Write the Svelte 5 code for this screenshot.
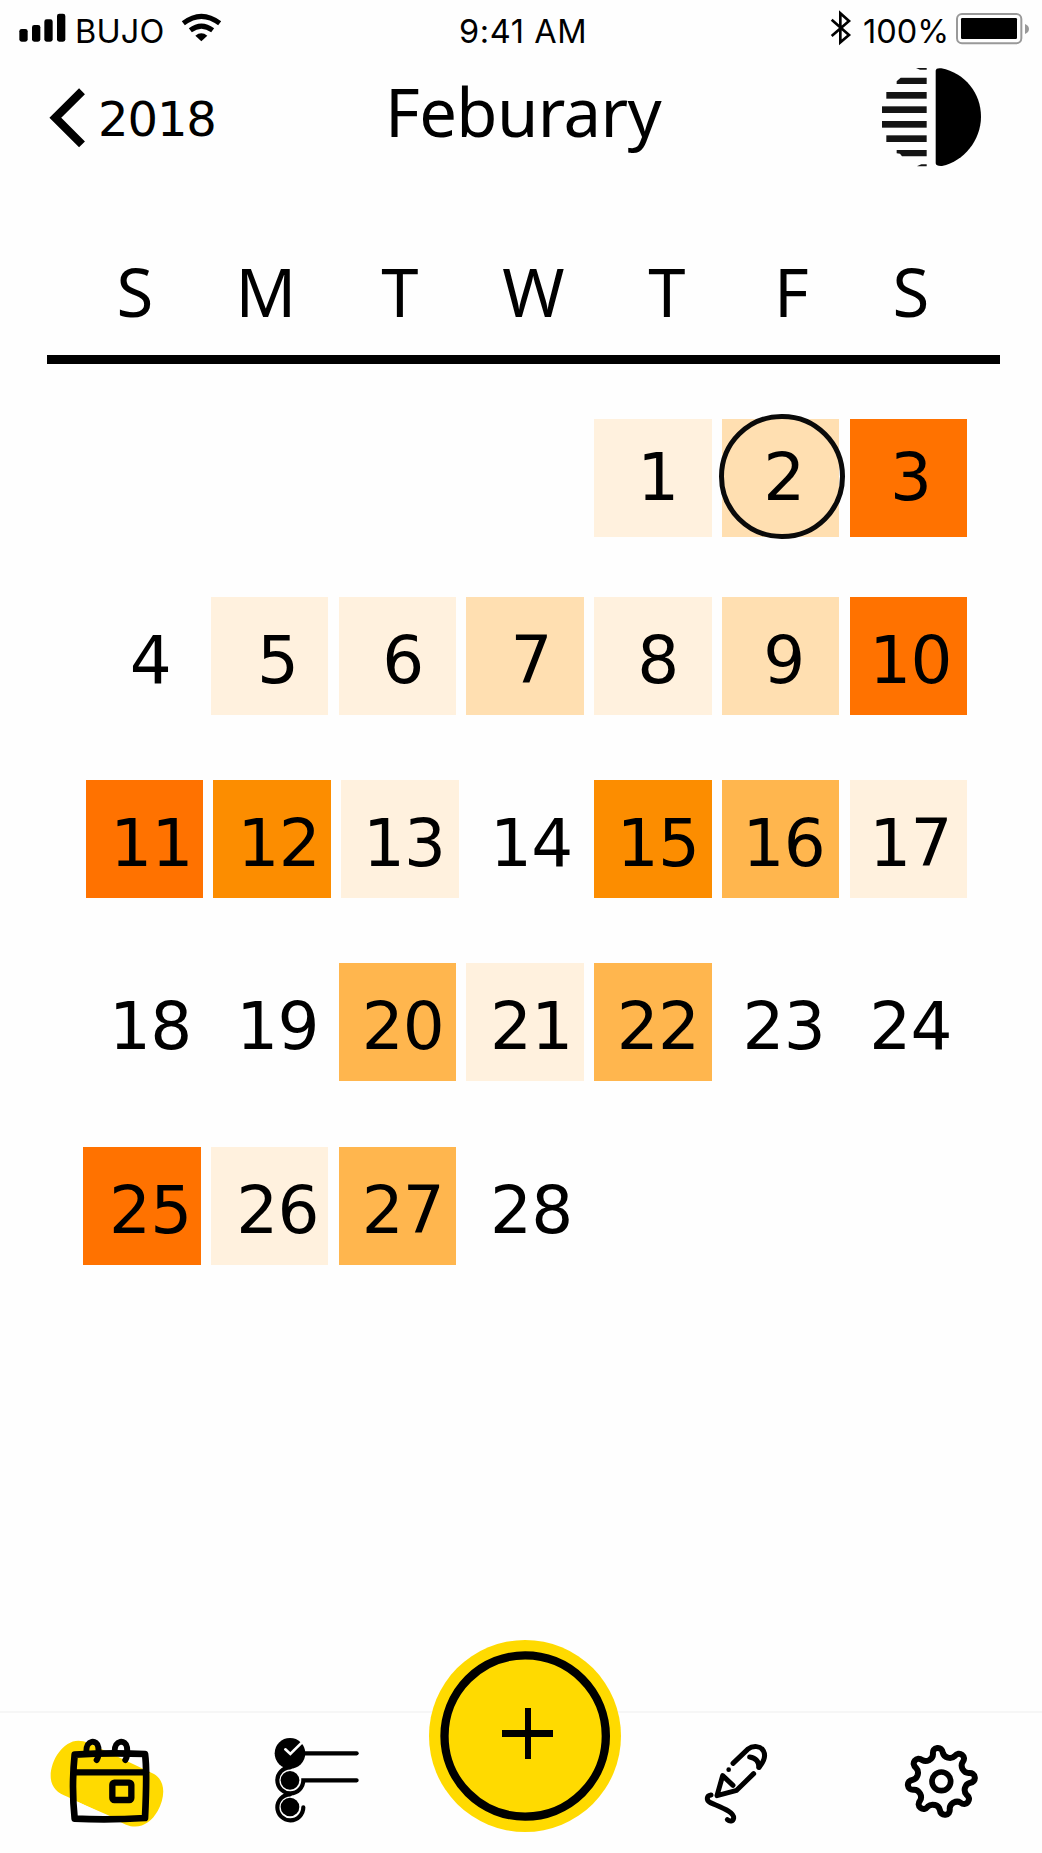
<script>
  const weekdays = ['S', 'M', 'T', 'W', 'T', 'F', 'S'];

  // Activity level per day, 0 (none) to 5 (highest)
  const levels = [
    1, 2, 5,
    0, 1, 1, 2, 1, 2, 5,
    5, 4, 1, 0, 4, 3, 1,
    0, 0, 3, 1, 3, 0, 0,
    5, 1, 3, 0
  ];
  const blanks = [0, 1, 2, 3];
  const today = 2;
  const days = levels.map((level, i) => ({ n: i + 1, level }));

  // Outline of the settings gear: one tooth rotated eight times
  function gearPath(cx, cy, tilt) {
    const tooth = [
      [-19, -72], [-16, -76], [-15, -84],
      [-15, -95], [-9, -101], [0, -101],
      [9, -101], [15, -95], [15, -84],
      [16, -76], [19, -72], [28, -68]
    ];
    const turn = ([x, y], deg) => {
      const a = (deg * Math.PI) / 180;
      const px = cx + x * Math.cos(a) - y * Math.sin(a);
      const py = cy + x * Math.sin(a) + y * Math.cos(a);
      return `${px.toFixed(1)} ${py.toFixed(1)}`;
    };
    let d = `M${turn([-28, -68], tilt)}`;
    for (let k = 0; k < 8; k++) {
      d += 'C' + tooth.map((p) => turn(p, tilt + k * 45)).join(' ');
    }
    return d + 'Z';
  }
  const gear = gearPath(755, 243, -7);
</script>

<main class="screen">
  <div class="status">
    <div class="status-left">
      <svg class="signal" viewBox="54 0 150 186">
        <rect x="58" y="87" width="25" height="38" rx="7" />
        <rect x="96" y="75" width="25" height="50" rx="7" />
        <rect x="133" y="58" width="25" height="67" rx="7" />
        <rect x="171" y="41" width="25" height="84" rx="7" />
      </svg>
      <span class="carrier">BUJO</span>
      <svg class="wifi" viewBox="540 0 129 186">
        <path d="M550 70Q604 28 659 70" fill="none" stroke="#000" stroke-width="15" />
        <path d="M571 91Q604 66 638 91" fill="none" stroke="#000" stroke-width="15" />
        <path d="M586 107Q604 93 622 107L604 124Z" />
      </svg>
    </div>
    <span class="time">9:41 AM</span>
    <div class="status-right">
      <svg class="bluetooth" viewBox="147 0 72 186">
        <path d="M155 59L207 105L181 127V40L207 63L155 108" fill="none" stroke="#000" stroke-width="8" />
      </svg>
      <span class="percent">100%</span>
      <svg class="battery" viewBox="522 0 231 186">
        <rect x="531" y="42" width="193" height="88" rx="15" fill="none" stroke="#999" stroke-width="6" />
        <rect x="543" y="54" width="168" height="63" rx="4" />
        <path d="M735 72Q747 77 747 87Q747 97 735 102Z" fill="#999" />
      </svg>
    </div>
  </div>

  <header class="header">
    <div class="back">
      <svg class="chevron" viewBox="144 186 117 354">
        <path d="M246 274L166 353L246 433" fill="none" stroke="#000" stroke-width="25" />
      </svg>
      <span class="year">2018</span>
    </div>
    <h1>Feburary</h1>
    <svg class="contrast" viewBox="300 186 309 354">
      <path d="M467 212Q468 203 484 205C555 219 603 280 603 350C603 420 552 483 486 498Q468 499 467 490Z" />
      <g fill="#141414">
        <path d="M408 204H440V209H420Z" />
        <path d="M362 233H440V252H350V244Z" />
        <rect x="319" y="276" width="121" height="20" />
        <rect x="306" y="319" width="134" height="20" />
        <rect x="306" y="363" width="134" height="20" />
        <rect x="319" y="406" width="121" height="20" />
        <path d="M350 450H440V469H366L360 461L350 460Z" />
        <path d="M412 498L424 493H440V499H412Z" />
      </g>
    </svg>
  </header>

  <div class="weekdays">
    {#each weekdays as name}
      <span>{name}</span>
    {/each}
  </div>

  <div class="days">
    {#each blanks as b (b)}
      <div class="day"></div>
    {/each}
    {#each days as { n, level } (n)}
      <div class="day level-{level}" class:nudged={n >= 11 && n <= 13} class:today={n === today}>
        {n}
      </div>
    {/each}
  </div>

  <nav class="tabs">
    <svg class="tab-calendar" viewBox="54 105 360 285">
      <path d="M145 122C100 122 62 180 62 228C62 260 82 280 112 290L288 374C328 390 362 370 383 333C406 292 408 243 372 222L175 128C165 124 155 122 145 122Z" fill="#ffda00" />
      <path d="M143 306L150 348H240Z" fill="#fefefe" />
      <path d="M265 166H340L348 208Z" fill="#fefefe" />
      <g fill="none" stroke="#000" stroke-linecap="round" stroke-linejoin="round">
        <path d="M134 164Q240 157 345 162Q352 210 345 354Q240 361 134 356Q124 260 134 164Z" stroke-width="20" />
        <path d="M132 217H348" stroke-width="19" />
        <path d="M169 156C167 118 202 118 205 142Q208 168 200 180" stroke-width="18" />
        <path d="M254 156C252 118 288 118 291 142Q294 168 286 180" stroke-width="18" />
        <rect x="247" y="248" width="57" height="52" rx="6" stroke-width="19" />
      </g>
    </svg>

    <svg class="tab-list" viewBox="70 105 265 270">
      <circle cx="121" cy="160" r="46" />
      <path d="M107 148L122 162L157 127" fill="none" stroke="#fefefe" stroke-width="8" stroke-linecap="round" />
      <g fill="none" stroke="#000" stroke-width="12.500" stroke-linecap="round">
        <path d="M158 160H321" />
        <path d="M321 241H161A39 39 0 1 1 121 202" />
        <path d="M161 322A39 39 0 1 1 121 283" />
      </g>
      <circle cx="121" cy="241" r="28" />
      <circle cx="121" cy="321" r="28" />
    </svg>

    <div class="add">
      <svg viewBox="57 60 576 576">
        <circle cx="345" cy="348" r="288" fill="#ffda00" />
        <circle cx="345.500" cy="348" r="242" fill="none" stroke="#000" stroke-width="25" />
        <path d="M276 330H345V264H363V330H429V351H363V417H345V351H276Z" />
      </svg>
    </div>

    <svg class="tab-write" viewBox="39 125 198 250">
      <g fill="none" stroke="#000" stroke-width="15" stroke-linecap="round" stroke-linejoin="round">
        <path d="M129 189L173 147C190 134 212 137 220 151C229 168 222 184 207 201" />
        <path d="M179 170C197 173 207 184 207 201" />
        <path d="M191 220L140 270L81 286L98 226L129 255" />
        <path d="M63 284C49 286 48 301 61 307C90 320 132 333 131 353C129 364 119 364 112 358" />
      </g>
      <circle cx="116" cy="208" r="7" />
    </svg>

    <svg class="tab-settings" viewBox="640 128 230 230">
      <path d={gear} fill="none" stroke="#000" stroke-width="18" stroke-linejoin="round" />
      <circle cx="755" cy="243" r="28" fill="none" stroke="#000" stroke-width="17" />
    </svg>
  </nav>
</main>

<style>
  :global(body) {
    background: #fefefe;
  }

  svg {
    display: block;
    flex: none;
  }

  .screen {
    width: 1042px;
    height: 1853px;
    display: flex;
    flex-direction: column;
    background: #fefefe;
    color: #000;
    overflow: hidden;
  }

  .status {
    height: 62px;
    display: grid;
    grid-template-columns: 459px 1fr 215px;
    font: 400 32.5px/64px Inter, sans-serif;
    white-space: nowrap;
  }

  .status svg {
    height: 62px;
  }

  .status-left,
  .status-right {
    display: flex;
  }

  .status-left {
    padding-left: 18px;
  }

  .signal {
    width: 50px;
  }

  .carrier {
    width: 105px;
    margin-left: 7px;
    letter-spacing: 0.2px;
  }

  .time {
    letter-spacing: 0.6px;
  }

  .wifi {
    width: 43px;
  }

  .status-right {
    padding-left: 2px;
  }

  .bluetooth {
    width: 24px;
  }

  .percent {
    width: 91px;
    margin-left: 10px;
    letter-spacing: 0;
  }

  .battery {
    width: 77px;
  }

  .header {
    height: 118px;
    display: grid;
    grid-template-columns: 385px 1fr 162px;
  }

  .back {
    display: flex;
    padding-left: 48px;
  }

  .chevron {
    width: 39px;
    height: 118px;
  }

  .year {
    margin-left: 11px;
    font: 400 48px/114px 'DejaVu Sans', sans-serif;
    letter-spacing: -1.1px;
  }

  h1 {
    margin: 0;
    font: 450 67px/98px 'Noto Sans', sans-serif;
    letter-spacing: -0.6px;
  }

  .contrast {
    width: 103px;
    height: 118px;
  }

  .weekdays {
    margin: 60px 42px 0 47px;
    padding-left: 22px;
    height: 115px;
    display: grid;
    grid-template-columns: 132px 130px 138px 129px 138px 111px 128px;
    border-bottom: 9px solid #000;
    font: 450 67px/103px 'Noto Sans', sans-serif;
    text-align: center;
  }

  .days {
    margin-left: 83px;
    padding-top: 55px;
    display: grid;
    grid-template-columns: repeat(7, 117.5px);
    grid-template-rows: 178px 183px 183px 184px 118px;
    column-gap: 10.3px;
    align-items: start;
    font: 400 66px/117.5px 'DejaVu Sans', sans-serif;
    letter-spacing: -0.8px;
    text-align: center;
  }

  .day {
    position: relative;
    box-sizing: border-box;
    height: 117.5px;
  }

  .day:nth-child(n + 8) {
    padding-top: 5px;
  }

  .day:nth-child(7n + 1) { padding-left: 17px; }
  .day:nth-child(7n + 2) { padding-left: 16px; }
  .day:nth-child(7n + 3) { padding-left: 11px; }
  .day:nth-child(7n + 4) { padding-left: 12px; }
  .day:nth-child(7n + 5) { padding-left: 10px; }
  .day:nth-child(7n + 6) { padding-left: 6px; }
  .day:nth-child(7n) { padding-left: 4px; }

  .level-1 { background: #fff1de; }
  .level-2 { background: #ffdfb1; }
  .level-3 { background: #ffb64e; }
  .level-4 { background: #fc8d00; }
  .level-5 { background: #ff7200; }

  .nudged {
    margin-left: 2.5px;
    margin-right: -2.5px;
    text-indent: -2.5px;
  }

  .today::after {
    content: '';
    position: absolute;
    box-sizing: border-box;
    left: -2.5px;
    top: -5.5px;
    width: 125.5px;
    height: 125.5px;
    border: 5.5px solid #0a0a0a;
    border-radius: 50%;
  }

  .tabs {
    margin-top: auto;
    height: 140px;
    border-top: 2px solid #f6f6f6;
    display: flex;
    align-items: flex-start;
  }

  .tab-calendar {
    width: 120px;
    height: 95px;
    margin: 22px 0 0 48px;
  }

  .tab-list {
    width: 88.3px;
    height: 90px;
    margin: 22px 0 0 105.3px;
  }

  .add {
    width: 192px;
    height: 192px;
    margin: -73px 0 0 67.4px;
  }

  .tab-write {
    width: 66px;
    height: 83.3px;
    margin: 28.7px 0 0 82px;
  }

  .tab-settings {
    width: 76.7px;
    height: 76.7px;
    margin: 29.7px 0 0 134.3px;
  }
</style>
